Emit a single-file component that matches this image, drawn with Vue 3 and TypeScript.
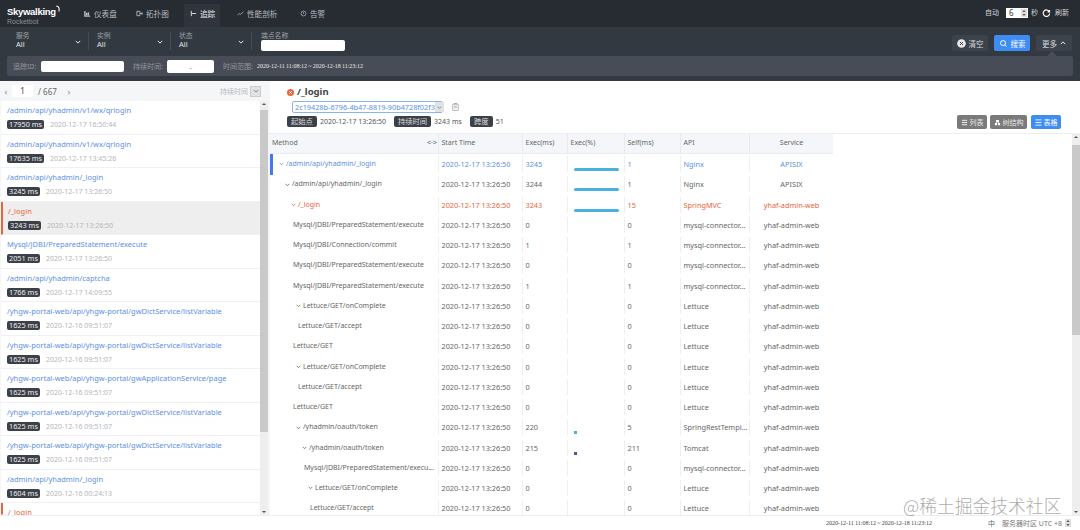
<script setup lang="ts">
interface Trace { title: string; ms: number; time: string; kind?: string }
interface Span { name: string; indent: number; arrow?: boolean; exec: number; self: number; api: string; service: string; kind?: string; bar?: string }

const navItems = [
  { key: 'dash', label: '仪表盘' },
  { key: 'topo', label: '拓扑图' },
  { key: 'tracing', label: '追踪', active: true },
  { key: 'perf', label: '性能剖析' },
  { key: 'alarm', label: '告警' },
]
const filters = ['服务', '实例', '状态']
const qr = '/admin/api/yhadmin/v1/wx/qrlogin'
const dict = '/yhgw-portal-web/api/yhgw-portal/gwDictService/listVariable'
const traces: Trace[] = [
  { title: qr, ms: 17950, time: '2020-12-17 16:50:44' },
  { title: qr, ms: 17635, time: '2020-12-17 13:45:26' },
  { title: '/admin/api/yhadmin/_login', ms: 3245, time: '2020-12-17 13:26:50' },
  { title: '/_login', ms: 3243, time: '2020-12-17 13:26:50', kind: 'sel' },
  { title: 'Mysql/JDBI/PreparedStatement/execute', ms: 2051, time: '2020-12-17 13:26:50' },
  { title: '/admin/api/yhadmin/captcha', ms: 1766, time: '2020-12-17 14:09:55' },
  { title: dict, ms: 1625, time: '2020-12-16 09:51:07' },
  { title: dict, ms: 1625, time: '2020-12-16 09:51:07' },
  { title: '/yhgw-portal-web/api/yhgw-portal/gwApplicationService/page', ms: 1625, time: '2020-12-16 09:51:07' },
  { title: dict, ms: 1625, time: '2020-12-16 09:51:07' },
  { title: dict, ms: 1625, time: '2020-12-16 09:51:07' },
  { title: '/admin/api/yhadmin/_login', ms: 1604, time: '2020-12-16 00:24:13' },
  { title: '/_login', ms: 0, time: '', kind: 'err' },
]
const spring = 'yhaf-admin-web'
const mysql = 'mysql-connector...'
const spans: Span[] = [
  { name: '/admin/api/yhadmin/_login', indent: 8, arrow: true, exec: 3245, self: 1, api: 'Nginx', service: 'APISIX', kind: 'blue', bar: 'long' },
  { name: '/admin/api/yhadmin/_login', indent: 14, arrow: true, exec: 3244, self: 1, api: 'Nginx', service: 'APISIX', bar: 'long' },
  { name: '/_login', indent: 20, arrow: true, exec: 3243, self: 15, api: 'SpringMVC', service: spring, kind: 'red', bar: 'long' },
  { name: 'Mysql/JDBI/PreparedStatement/execute', indent: 22, exec: 0, self: 0, api: mysql, service: spring },
  { name: 'Mysql/JDBI/Connection/commit', indent: 22, exec: 1, self: 1, api: mysql, service: spring },
  { name: 'Mysql/JDBI/PreparedStatement/execute', indent: 22, exec: 0, self: 0, api: mysql, service: spring },
  { name: 'Mysql/JDBI/PreparedStatement/execute', indent: 22, exec: 1, self: 1, api: mysql, service: spring },
  { name: 'Lettuce/GET/onComplete', indent: 25, arrow: true, exec: 0, self: 0, api: 'Lettuce', service: spring },
  { name: 'Lettuce/GET/accept', indent: 27, exec: 0, self: 0, api: 'Lettuce', service: spring },
  { name: 'Lettuce/GET', indent: 22, exec: 0, self: 0, api: 'Lettuce', service: spring },
  { name: 'Lettuce/GET/onComplete', indent: 25, arrow: true, exec: 0, self: 0, api: 'Lettuce', service: spring },
  { name: 'Lettuce/GET/accept', indent: 27, exec: 0, self: 0, api: 'Lettuce', service: spring },
  { name: 'Lettuce/GET', indent: 22, exec: 0, self: 0, api: 'Lettuce', service: spring },
  { name: '/yhadmin/oauth/token', indent: 25, arrow: true, exec: 220, self: 5, api: 'SpringRestTempl...', service: spring, bar: 'dot' },
  { name: '/yhadmin/oauth/token', indent: 31, arrow: true, exec: 215, self: 211, api: 'Tomcat', service: spring, bar: 'dark' },
  { name: 'Mysql/JDBI/PreparedStatement/execu...', indent: 33, exec: 0, self: 0, api: mysql, service: spring },
  { name: 'Lettuce/GET/onComplete', indent: 37, arrow: true, exec: 0, self: 0, api: 'Lettuce', service: spring },
  { name: 'Lettuce/GET/accept', indent: 39, exec: 0, self: 0, api: 'Lettuce', service: spring },
]
const columns = ['Start Time', 'Exec(ms)', 'Exec(%)', 'Self(ms)', 'API', 'Service']
</script>

<template>
  <div class="app">
    <header class="nav">
      <div class="logo">
        <div class="logo-main">Skywalking<svg class="swoosh" viewBox="0 0 6 9" fill="none" stroke="#fff" stroke-width="1.300"><path d="M.5 1C3 1 4.500 3 3.500 7.500" /></svg></div>
        <div class="logo-sub">Rocketbot</div>
      </div>
      <nav class="menu">
        <a v-for="n in navItems" :key="n.key" class="menu-item" :class="[n.key, { active: n.active }]">
          <svg class="menu-icon" viewBox="0 0 8 8" fill="none" stroke="currentColor">
            <path v-if="n.key === 'dash'" d="M1 1v6h6M3 3v3M5 2.500v3.500" stroke-width="1.600" />
            <path v-else-if="n.key === 'topo'" d="M1 1.500h3.500v5H1zM4.500 4h2.500M7 2.500v3" stroke-width="1" />
            <path v-else-if="n.key === 'tracing'" d="M1.500 1v6M1.500 4H7" stroke-width="1" />
            <path v-else-if="n.key === 'perf'" d="M.5 6l2-2 1.500 1L7.500 2" stroke-width=".8" />
            <g v-else stroke-width=".8"><circle cx="4" cy="4" r="2.800" /><path d="M4 2.500v2" /></g>
          </svg>
          <span>{{ n.label }}</span>
        </a>
      </nav>
      <div class="auto">
        <span>自动</span>
        <span class="num-input"><i>6</i>
          <svg class="spin" viewBox="0 0 6 8"><rect width="6" height="8" fill="#ddd" /><path d="M3 1l1.500 2h-3zM3 7L1.500 5h3z" fill="#555" /></svg>
        </span>
        <span>秒</span>
        <svg class="refresh" viewBox="0 0 10 10" fill="none" stroke="#fff" stroke-width="1.300"><path d="M8 2.800A3.600 3.600 0 1 0 8.500 5M8.400 1v2.200H6.200" /></svg>
        <span>刷新</span>
      </div>
    </header>

    <section class="filters">
      <div v-for="f in filters" :key="f" class="filter">
        <div class="filter-text"><label>{{ f }}</label><strong>All</strong></div>
        <svg class="chev" viewBox="0 0 8 5" fill="none" stroke="#fff" stroke-width="1.200"><path d="M1 1l3 3 3-3" /></svg>
      </div>
      <div class="endpoint">
        <label>端点名称</label>
        <div class="white-input"></div>
      </div>
      <div class="actions">
        <button class="act">
          <svg viewBox="0 0 10 10"><circle cx="5" cy="5" r="4.800" fill="#e8e8e8" /><path d="M3.300 3.300l3.400 3.400M6.700 3.300L3.300 6.700" stroke="#3b4048" stroke-width="1.100" /></svg>
          清空
        </button>
        <button class="act primary">
          <svg viewBox="0 0 10 10" fill="none" stroke="#fff" stroke-width="1"><circle cx="4.500" cy="4.500" r="2.800" /><path d="M6.500 6.500l2 2" /></svg>
          搜索
        </button>
        <button class="act more">更多 <svg viewBox="0 0 8 5" fill="none" stroke="#fff" stroke-width="1.200"><path d="M1 4l3-3 3 3" /></svg></button>
      </div>
    </section>

    <section class="extra">
      <div class="extra-panel">
        <label class="id-label">追踪ID:</label>
        <div class="white-input trace-id"></div>
        <label class="dur-label">持续时间:</label>
        <div class="white-input dur"><span>_</span></div>
        <label class="range-label">时间范围:</label>
        <span class="range">2020-12-11 11:08:12 ~ 2020-12-18 11:23:12</span>
      </div>
    </section>

    <main class="body">
      <aside class="left">
        <div class="pager">
          <span class="pg-arrow">‹</span>
          <span class="pg-input">1</span>
          <span class="pg-total">/ 667</span>
          <span class="pg-arrow next">›</span>
          <span class="sort">持续时间</span>
          <span class="sort-box"><svg viewBox="0 0 8 5" fill="none" stroke="#666" stroke-width="1"><path d="M1 1l3 3 3-3" /></svg></span>
        </div>
        <div class="list-wrap">
          <ul class="list">
            <li v-for="(t, i) in traces" :key="i" class="item" :class="t.kind">
              <div class="item-title">{{ t.title }}</div>
              <div v-if="t.ms" class="item-meta"><span class="ms">{{ t.ms }} ms</span><span class="time">{{ t.time }}</span></div>
            </li>
          </ul>
          <div class="scroll left-scroll">
            <span class="sc-up"></span>
            <span class="sc-thumb"></span>
            <span class="sc-down"></span>
          </div>
        </div>
      </aside>

      <section class="detail">
        <div class="detail-head">
          <div class="head-left">
            <div class="title-row">
              <svg class="err" viewBox="0 0 10 10"><circle cx="5" cy="5" r="5" fill="#e8643c" /><path d="M3.200 3.200l3.600 3.600M6.800 3.200L3.200 6.800" stroke="#fff" stroke-width="1.300" /></svg>
              <h1>/_login</h1>
            </div>
            <div class="id-row">
              <div class="id-select">
                <span>2c19428b-6796-4b47-8819-90b4728f02f3</span>
                <i><svg viewBox="0 0 8 5" fill="none" stroke="#555" stroke-width="1"><path d="M1 1l3 3 3-3" /></svg></i>
              </div>
              <svg class="copy" viewBox="0 0 8 10" fill="none" stroke="#888" stroke-width=".8"><rect x=".6" y="1.500" width="6.800" height="8" rx=".6" /><path d="M2.500 1.500V.6h3v.9M2.200 4h3.600M2.200 6h3.600" /></svg>
            </div>
            <div class="tags">
              <span class="tag">起始点</span><span class="val v1">2020-12-17 13:26:50</span>
              <span class="tag">持续时间</span><span class="val v2">3243 ms</span>
              <span class="tag">跨度</span><span class="val">51</span>
            </div>
          </div>
          <div class="views">
            <button class="view"><svg viewBox="0 0 8 8" stroke="#fff" stroke-width="1"><path d="M1 1.500h6M1 4h6M1 6.500h6" /></svg>列表</button>
            <button class="view"><svg viewBox="0 0 8 8" fill="#fff"><path d="M2.500 1h3l.5 3H2zM1 4.500h2.500V7H1zM4.500 4.500H7V7H4.500z" /></svg>树结构</button>
            <button class="view on"><svg viewBox="0 0 8 8" stroke="#fff" stroke-width="1"><path d="M.5 1h7M.5 4h7M.5 7h7" /></svg>表格</button>
          </div>
        </div>

        <div class="table-wrap">
          <div class="table">
            <div class="row thead">
              <div class="cell method">Method<span class="resize">&lt;·&gt;</span></div>
              <div v-for="c in columns" :key="c" class="cell" :class="{ center: c === 'Service' }">{{ c }}</div>
            </div>
            <div v-for="(s, i) in spans" :key="i" class="row span" :class="s.kind">
              <div class="cell method" :style="{ paddingLeft: s.indent + 1 + 'px' }">
                <svg v-if="s.arrow" class="tree-arrow" viewBox="0 0 8 5" fill="none" stroke="currentColor" stroke-width="1.300"><path d="M1 1l3 3 3-3" /></svg>
                <span class="mname">{{ s.name }}</span>
              </div>
              <div class="cell">2020-12-17 13:26:50</div>
              <div class="cell">{{ s.exec }}</div>
              <div class="cell bar-cell"><span v-if="s.bar" class="bar" :class="s.bar"></span></div>
              <div class="cell">{{ s.self }}</div>
              <div class="cell">{{ s.api }}</div>
              <div class="cell center">{{ s.service }}</div>
            </div>
          </div>
          <div class="scroll right-scroll">
            <span class="sc-up"></span>
            <span class="sc-thumb"></span>
            <span class="sc-down"></span>
          </div>
        </div>
      </section>
    </main>

    <footer class="foot">
      <span class="foot-range">2020-12-11 11:08:12 ~ 2020-12-18 11:23:12</span>
      <span class="foot-lang">中</span>
      <span class="foot-zone">服务器时区 UTC +8</span>
      <svg class="foot-spin" viewBox="0 0 6 8"><rect width="6" height="8" fill="#ddd" /><path d="M3 1l1.500 2h-3zM3 7L1.500 5h3z" fill="#555" /></svg>
    </footer>

    <div class="watermark">@稀土掘金技术社区</div>
  </div>
</template>

<style>
html, body { margin: 0; background: #fff; }
</style>

<style scoped>
* { box-sizing: border-box; }
.app {
  position: relative;
  width: 1080px;
  height: 530px;
  overflow: hidden;
  display: flex;
  flex-direction: column;
  font-family: "Noto Sans", "Noto Sans CJK SC", sans-serif;
  font-size: 7px;
  color: #555;
  background: #fff;
}
.nav {
  height: 27px;
  flex: none;
  background: #272b32;
  display: flex;
  align-items: flex-start;
  color: #cfd2d6;
}
.logo { width: 81px; padding: 7px 0 0 7px; line-height: 1; }
.logo-main { color: #fff; font-family: "Liberation Sans", sans-serif; font-size: 9.500px; font-weight: 700; letter-spacing: -.3px; display: flex; align-items: flex-start; }
.swoosh { width: 5px; height: 8px; margin: -2px 0 0 0; }
.logo-sub { color: #8d9196; font-family: "Liberation Sans", sans-serif; font-size: 7px; margin-top: 1px; }
.menu { display: flex; }
.menu-item { height: 23px; margin-top: 4px; display: flex; align-items: center; gap: 3px; font-size: 7.600px; color: #b8bbc0; padding-bottom: 4px; }
.menu-icon { width: 7px; height: 7px; flex: none; }
.menu-item.dash { padding-left: 3px; width: 55px; }
.menu-item.topo { width: 48px; }
.menu-item.tracing { width: 36px; padding-left: 6px; margin-left: 0; background: #30343c; color: #e8e9ea; border-radius: 2px 2px 0 0; }
.menu-item.perf { margin-left: 17px; width: 63px; }
.menu-item.alarm { width: 30px; }
.auto { margin-left: auto; margin-top: 8px; padding-right: 11px; display: flex; align-items: center; gap: 3px; color: #d6d8da; font-size: 7px; line-height: 10px; }
.num-input { width: 22px; height: 10px; background: #fff; color: #333; margin: 0 0 0 4px; padding: 0 1px 0 3px; display: flex; justify-content: space-between; align-items: center; font-size: 8px; }
.num-input i { font-style: normal; }
.spin { width: 6px; height: 8px; }
.refresh { width: 9px; height: 9px; margin-left: 1px; margin-right: 1px; }

.filters {
  height: 29px;
  flex: none;
  background: #333940;
  display: flex;
  color: #fff;
}
.filter { width: 82px; padding: 0 8px 3px 16px; display: flex; justify-content: space-between; align-items: center; position: relative; }
.filter::after { content: ""; position: absolute; right: 0; top: 5px; height: 18px; width: 1px; background: #474c54; }
.filter:nth-child(1) { width: 89px; }
.filter:nth-child(2) { width: 82px; padding-left: 8px; }
.filter:nth-child(3) { width: 81px; padding-left: 8px; }
.filter-text { display: flex; flex-direction: column; line-height: 9px; }
.filter-text label, .endpoint label { color: #9ea2a7; font-size: 6.800px; }
.filter-text strong { font-weight: 400; font-size: 7.500px; color: #e4e5e7; }
.chev { width: 6px; height: 4px; margin-top: 3px; }
.endpoint { margin-left: 9px; width: 84px; padding-top: 5px; line-height: 8px; }
.white-input { background: #fff; border-radius: 2px; height: 11px; }
.actions { margin-left: auto; padding: 8px 8px 0 0; display: flex; gap: 6px; }
.act { width: 36px; height: 16px; border: none; border-radius: 2px; background: #3d434b; color: #d6d8da; font: inherit; font-size: 7.500px; padding: 0; display: flex; align-items: center; justify-content: center; gap: 3px; }
.act svg { width: 9px; height: 9px; }
.act.primary { background: #3d8df5; color: #fff; }
.act.more svg { width: 6px; height: 4px; }
.act.more { position: relative; }
.act.more::after { content: ""; position: absolute; left: 11px; bottom: -5px; border: 5px solid transparent; border-top: 0; border-bottom-color: #484c56; }

.extra { height: 25px; flex: none; background: #333940; padding: 0 7px 5px; }
.extra-panel { height: 20px; background: #484c56; border-radius: 2px; display: flex; align-items: center; padding-left: 6px; color: #93969c; font-size: 7px; }
.id-label { width: 28px; white-space: nowrap; }
.trace-id { width: 83px; }
.dur-label { margin-left: 9px; width: 34px; white-space: nowrap; }
.dur { width: 47px; height: 13px; color: #999; text-align: center; line-height: 11px; }
.range-label { margin-left: 9px; width: 34px; white-space: nowrap; }
.range { font-family: "Liberation Serif", serif; font-size: 6px; color: #e8e8ea; white-space: nowrap; word-spacing: -.3px; }

.body { flex: 1; min-height: 0; display: flex; background: #f4f6f8; }
.left { width: 270px; flex: none; display: flex; flex-direction: column; }
.pager { height: 20px; flex: none; display: flex; align-items: center; padding-left: 3px; color: #777; font-size: 8px; }
.pg-arrow { width: 6px; font-size: 9px; color: #888; text-align: center; }
.pg-arrow.next { margin-left: 9px; }
.pg-input { margin-left: 3px; width: 21px; height: 12px; background: #fff; text-align: center; color: #444; line-height: 12px; }
.pg-total { margin-left: 5px; color: #666; }
.sort { margin-left: auto; color: #b5b8bc; font-size: 7px; }
.sort-box { margin: 0 9px 0 2px; width: 11px; height: 11px; background: #e0e2e4; border: 1px solid #ccc; display: flex; align-items: center; justify-content: center; }
.sort-box svg { width: 6px; height: 4px; }
.list-wrap { flex: 1; min-height: 0; display: flex; background: #fff; margin-left: 1px; margin-right: 2px; overflow: hidden; }
.list { list-style: none; margin: 0; padding: 0; width: 259px; flex: none; overflow: hidden; }
.item { height: 33.500px; padding: 3px 0 0 6px; border-bottom: 1px solid #f0f1f3; overflow: hidden; }
.item-title { color: #5d8fe6; font-size: 7.500px; line-height: 12px; white-space: nowrap; }
.item-meta { display: flex; align-items: center; margin-top: 4px; }
.ms { background: #3c4048; color: #eee; font-size: 7.300px; line-height: 9px; height: 9px; border-radius: 2px; padding: 0 2px; }
.time { margin-left: 6px; color: #b4b6ba; font-size: 7px; line-height: 9px; }
.item.sel { background: #eeeeee; border-left: 2px solid #e8643c; padding-left: 5px; }
.item.sel .item-title, .item.err .item-title { color: #e8643c; }
.item.err { border-left: 2px solid #e8643c; padding: 3px 0 0 5px; height: 12px; overflow: visible; }
.scroll { width: 8px; flex: none; background: #eee; display: flex; flex-direction: column; }
.sc-up, .sc-down { height: 9px; flex: none; position: relative; }
.sc-up::after, .sc-down::after { content: ""; position: absolute; left: 1.500px; border: 2.500px solid transparent; }
.sc-up::after { top: 2px; border-top: 0; border-bottom-color: #555; }
.sc-down::after { bottom: 2px; border-bottom: 0; border-top-color: #555; }
.sc-thumb { background: #c9c9c9; display: block; }
.left-scroll .sc-thumb { height: 322px; }
.left-scroll .sc-down { margin-top: auto; }
.right-scroll .sc-thumb { height: 190px; }
.right-scroll .sc-up { height: 11px; }
.right-scroll .sc-down { margin-top: auto; }

.detail { flex: 1; min-width: 0; display: flex; flex-direction: column; background: #fff; }
.detail-head { height: 52px; flex: none; display: flex; justify-content: space-between; padding: 5px 19px 0 17px; }
.title-row { display: flex; align-items: center; gap: 3px; height: 12px; }
.err { width: 7px; height: 7px; }
h1 { margin: 0; font-size: 9.500px; font-weight: 700; color: #444; line-height: 12px; }
.id-row { display: flex; align-items: center; margin: 3px 0 0 5px; height: 12px; }
.id-select { width: 151px; height: 12px; border: 1px solid #8ab4ee; border-radius: 2px; display: flex; justify-content: space-between; font-size: 7.300px; line-height: 10px; color: #5d8fe6; padding-left: 2px; background: #fff; white-space: nowrap; }
.id-select i { width: 9px; background: #e0e2e4; display: flex; align-items: center; justify-content: center; flex: none; }
.id-select i svg { width: 5px; height: 3px; }
.copy { width: 7px; height: 8px; margin-left: 9px; }
.tags { display: flex; align-items: center; margin-top: 3px; height: 11px; color: #555; font-size: 7px; }
.tag { background: #3c4048; color: #ddd; border-radius: 2px; height: 11px; line-height: 11px; padding: 0 4px; font-size: 7.300px; }
.val { margin-left: 3px; }
.val.v1 { width: 74px; }
.val.v2 { width: 36px; }
.views { display: flex; gap: 3px; padding-top: 29px; }
.view { height: 14px; width: 30px; border: none; border-radius: 2px; background: #7a7a7a; color: #e6e6e6; font: inherit; font-size: 7px; padding: 0; display: flex; align-items: center; justify-content: center; gap: 2px; }
.view:nth-child(2) { width: 37px; }
.view:last-child { margin-left: 1px; }
.view svg { width: 7px; height: 7px; flex: none; }
.view.on { background: #3d8df5; color: #fff; }
.table-wrap { flex: 1; min-height: 0; display: flex; border-top: 1px solid #eceef0; overflow: hidden; }
.table { width: 802px; flex: none; overflow: hidden; }
.row { display: grid; grid-template-columns: 168px 84px 45px 57px 56px 69px 84px; width: 563px; }
.thead { height: 20px; background: #f4f6f9; color: #666; border-bottom: 1px solid #eaecef; }
.thead .cell { height: 19px; line-height: 18px; border-left: 1px solid #e8eaee; }
.thead .method { border-left: 0; padding-left: 2px; position: relative; }
.resize { position: absolute; left: 157px; top: 0; color: #666; font-size: 7px; }
.span { height: 20.250px; padding-top: 2px; color: #666; font-size: 7.300px; }
.cell { white-space: nowrap; overflow: hidden; position: relative; line-height: 16px; height: 16px; border-left: 1px solid #eeeff1; padding-left: 2.500px; }
.span .method { border-left: 0; display: flex; align-items: center; font-size: 7px; }
.span.blue .cell { color: #5d8fe6; }
.span.red .cell { color: #e8643c; }
.center { text-align: center; padding-left: 0; }
.tree-arrow { width: 5px; height: 3.500px; margin-right: 2px; flex: none; }
.mname { white-space: nowrap; }
.bar-cell { overflow: visible; }
.bar { position: absolute; left: 5.500px; top: 12px; display: block; background: #4ab1dc; height: 3px; border-radius: 2px; }
.bar.long { width: 45px; }
.bar.dot { width: 3px; height: 3px; left: 6px; top: 12px; border-radius: 0; }
.bar.dark { width: 3px; height: 3px; left: 6px; top: 12px; border-radius: 0; background: #5a4fa8; }
.span.blue { position: relative; }
.span.blue::before { content: ""; position: absolute; left: 0; top: 0; width: 2.500px; height: 21px; background: #3d7cf0; }
.foot { height: 15px; flex: none; background: #fff; border-top: 1px solid #eceef0; display: flex; align-items: center; color: #666; padding-left: 826px; font-size: 7px; white-space: nowrap; }
.foot-range { font-family: "Liberation Serif", serif; font-size: 6px; width: 162px; color: #444; word-spacing: -.3px; }
.foot-lang { width: 14px; }
.foot-zone { width: 63px; color: #777; }
.foot-spin { width: 6px; height: 8px; }
.watermark { position: absolute; left: 903px; top: 493px; font-size: 17.800px; line-height: 24px; font-weight: 300; color: rgba(110, 110, 110, .6); white-space: nowrap; font-family: "Noto Sans CJK SC", sans-serif; }
</style>
